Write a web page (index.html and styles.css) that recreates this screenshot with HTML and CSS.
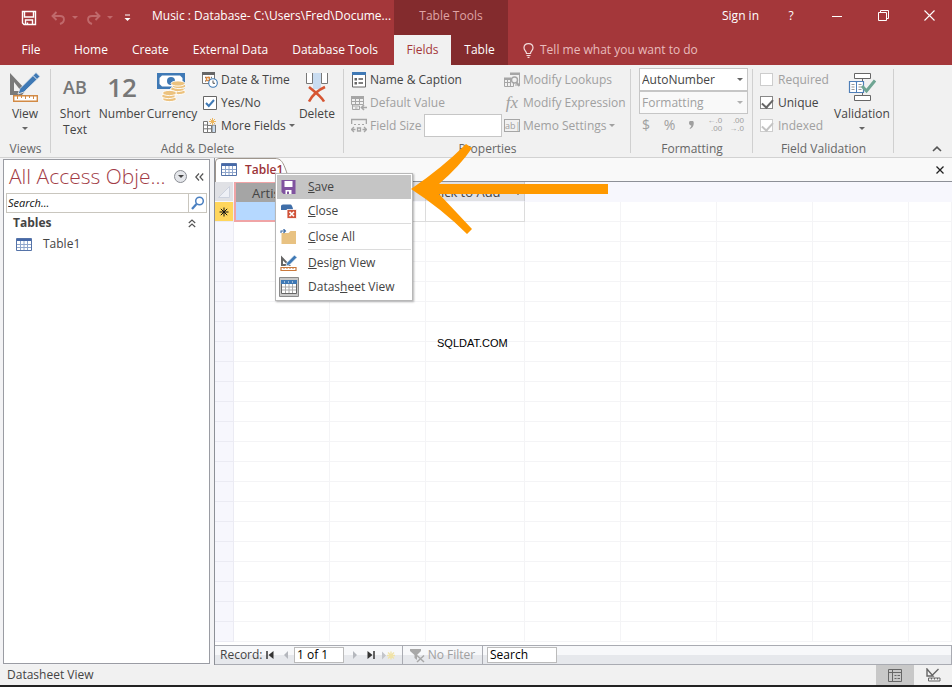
FILE: index.html
```html
<!DOCTYPE html>
<html lang="en">

<head>
    <meta charset="UTF-8">
    <meta name="viewport" content="width=device-width, initial-scale=1.0">
    <title>Music : Database</title>
    <link rel="stylesheet" href="styles.css">
</head>

<body>

    <header class="top-bar">
        <div class="top-left">
            <div class="quick-access">
                <button class="qa-save" aria-label="Save">
                    <svg width="16" height="16" viewBox="0 0 16 16"><path d="M1.500 1.500H14.500V14.500H3L1.500 13Z M3.500 1.500V7H12.500V1.500 M4.500 14.500V10H11.500V14.500 M6.500 12.500V14.500" fill="none" stroke="#fff" stroke-width="1.400"/></svg>
                </button>
                <button class="qa-undo" aria-label="Undo">
                    <svg width="15" height="14" viewBox="0 0 15 14"><path d="M5.500 1L1.500 5L5.500 9 M2 5H9C14 5 14.500 11 9 13" fill="none" stroke="#c0696b" stroke-width="1.900"/></svg>
                    <span class="caret"></span>
                </button>
                <button class="qa-redo" aria-label="Redo">
                    <svg width="15" height="14" viewBox="0 0 15 14"><path d="M9.500 1L13.500 5L9.500 9 M13 5H6C1 5 0.500 11 6 13" fill="none" stroke="#c0696b" stroke-width="1.900"/></svg>
                    <span class="caret"></span>
                </button>
                <button class="qa-more" aria-label="Customize Quick Access Toolbar">
                    <svg width="7" height="8" viewBox="0 0 7 8"><path d="M1 1H6" stroke="#fff"/><path d="M0.500 4H6.500L3.500 7Z" fill="#fff"/></svg>
                </button>
                <span class="app-title">Music : Database- C:\Users\Fred\Docume...</span>
            </div>
            <nav class="tabs">
                <button class="tab tab-file">File</button>
                <button class="tab">Home</button>
                <button class="tab">Create</button>
                <button class="tab">External Data</button>
                <button class="tab">Database Tools</button>
            </nav>
        </div>
        <div class="context-tabs">
            <div class="context-title">Table Tools</div>
            <nav class="tabs">
                <button class="tab active">Fields</button>
                <button class="tab">Table</button>
            </nav>
        </div>
        <div class="top-right">
            <div class="window-controls">
                <button class="sign-in">Sign in</button>
                <button class="win-btn" aria-label="Help">?</button>
                <button class="win-btn" aria-label="Minimize">
                    <svg width="10" height="10" viewBox="0 0 10 10"><path d="M0 5.500H10" stroke="#fff"/></svg>
                </button>
                <button class="win-btn" aria-label="Restore">
                    <svg width="11" height="11" viewBox="0 0 11 11"><path d="M0.500 2.500H8.500V10.500H0.500Z M2.500 2.500V0.500H10.500V8.500H8.500" fill="none" stroke="#fff"/></svg>
                </button>
                <button class="win-btn" aria-label="Close">
                    <svg width="11" height="11" viewBox="0 0 11 11"><path d="M0.500 0.500L10.500 10.500M10.500 0.500L0.500 10.500" stroke="#fff" stroke-width="1.100"/></svg>
                </button>
            </div>
            <button class="tell-me">
                <svg width="11" height="15" viewBox="0 0 11 15"><path d="M3.500 10.500C3.500 8 1 7.500 1 4.800C1 2.300 3 0.700 5.500 0.700S10 2.300 10 4.800C10 7.500 7.500 8 7.500 10.500Z M3.500 12.500H7.500 M4.500 14.300H6.500" fill="none" stroke="#f3dcdc" stroke-width="1.200"/></svg>
                Tell me what you want to do
            </button>
        </div>
    </header>

    <section class="ribbon">
        <div class="group group-views">
            <div class="group-body">
                <button class="big-btn">
                    <svg width="32" height="30" viewBox="0 0 32 30"><path d="M1 1V23H13L17 18Z M5 10V19H12Z" fill="#7a7a7a" fill-rule="evenodd"/><path d="M27 0.500L31 4.500L15 20L9 22L11 16.500Z" fill="#3f79b5" stroke="#f1f1f1" stroke-width="0.800"/><path d="M24 3.500L28 7.500" stroke="#f1f1f1"/><path d="M4.700 23.700H28.300V29.300H4.700Z" fill="#fff" stroke="#d28a45" stroke-width="1.400"/><path d="M8.500 24V27M12.500 24V26M16.500 24V27M20.500 24V26M24.500 24V27" stroke="#d28a45"/></svg>
                    <span>View</span>
                    <span class="caret"></span>
                </button>
            </div>
            <div class="group-label">Views</div>
        </div>

        <div class="group group-add">
            <div class="group-body">
                <button class="big-btn w-short"><span class="type-icon">AB</span><span>Short<br>Text</span></button>
                <button class="big-btn w-number"><span class="type-icon large">12</span><span>Number</span></button>
                <button class="big-btn w-currency">
                    <svg width="30" height="30" viewBox="0 0 30 30"><path d="M0 1H28V17H0Z" fill="#3f79b5"/><path d="M5 3.500H23L25.500 6V12L23 14.500H5L2.500 12V6Z" fill="#fff"/><circle cx="14" cy="9" r="4" fill="#3f79b5"/><g fill="#ecc27e" stroke="#fff" stroke-width="0.900"><ellipse cx="21.500" cy="20" rx="7" ry="2.600"/><ellipse cx="20.500" cy="17" rx="7" ry="2.600"/><ellipse cx="22" cy="14" rx="7" ry="2.600"/><ellipse cx="21" cy="11.500" rx="7" ry="2.600"/><ellipse cx="12.500" cy="27" rx="7" ry="2.600"/><ellipse cx="11.500" cy="24" rx="7" ry="2.600"/><ellipse cx="12.500" cy="21" rx="7" ry="2.600"/></g></svg>
                    <span>Currency</span>
                </button>
                <div class="small-col col-types">
                    <button class="small-btn">
                        <svg width="16" height="16" viewBox="0 0 16 16"><path d="M0.500 0.500H12.500V11.500H0.500Z" fill="#fff" stroke="#777"/><path d="M0 0H13V3H0Z" fill="#666"/><path d="M3 5.500H4M6 5.500H7M9 5.500H10M3 9H4" stroke="#777" stroke-width="1.500"/><path d="M4.500 5.500H7.500V8.500H4.500Z" fill="none" stroke="#e08a3c" stroke-width="1.300"/><circle cx="11" cy="11" r="4.300" fill="#fff" stroke="#3f79b5" stroke-width="1.100"/><path d="M11 8.500V11.300H13" fill="none" stroke="#555"/></svg>
                        Date &amp; Time
                    </button>
                    <button class="small-btn">
                        <svg width="16" height="16" viewBox="0 0 16 16"><path d="M1.500 1.500H14.500V14.500H1.500Z" fill="#fff" stroke="#666"/><path d="M4 8L6.800 11L12 5" fill="none" stroke="#3f79b5" stroke-width="2"/></svg>
                        Yes/No
                    </button>
                    <button class="small-btn">
                        <svg width="16" height="16" viewBox="0 0 16 16"><path d="M1.500 3.500H5.500V14.500H1.500Z M5.500 7.500H9.500V14.500H5.500Z M1.500 7H5.500M1.500 10.800H9.500" fill="#fff" stroke="#777"/><path d="M10 7H13.500V14.500H10Z" fill="#c9dcf0" stroke="#777"/><path d="M7 0H14V6.500H7Z" fill="#f1f1f1"/><path d="M10.500 0V7M7 3.500H14M8 1L13 6M13 1L8 6" stroke="#ecb65e"/></svg>
                        More Fields<span class="caret"></span>
                    </button>
                </div>
                <button class="big-btn w-delete">
                    <svg width="24" height="30" viewBox="0 0 24 30"><path d="M1.500 1V11.500H7.500V1M16.500 1V11.500H22.500V1" fill="#fff" stroke="#777"/><path d="M8 1H16V17H8Z" fill="#c9dcf0"/><path d="M4 15C9 19 16 24 19 29.500M20 15C13 18 7 24 4 29.500" fill="none" stroke="#d65532" stroke-width="2.600"/></svg>
                    <span>Delete</span>
                </button>
            </div>
            <div class="group-label">Add &amp; Delete</div>
        </div>

        <div class="group group-props">
            <div class="group-body">
                <div class="small-col col-caption">
                    <button class="small-btn">
                        <svg width="16" height="16" viewBox="0 0 16 16"><path d="M1.500 1.500H14.500V15H1.500Z" fill="#fff" stroke="#666"/><path d="M1 0H15V3H1Z" fill="#3f79b5"/><path d="M7.500 7H12M7.500 11H12" stroke="#555" stroke-width="1.400"/><path d="M3.500 6H6V8.500H3.500Z M3.500 10H6V12.500H3.500Z" fill="#666"/></svg>
                        Name &amp; Caption
                    </button>
                    <button class="small-btn" disabled>
                        <svg width="16" height="16" viewBox="0 0 16 16"><path d="M0.500 3.500H12.500V9.500H0.500Z M4.500 3V9.500M8.500 3V9.500M0.500 6.500H12.500 M1.500 9.500V14.500H8.500V11H1.500 M4 13H6.500" fill="none" stroke="#a6a6a6"/><path d="M0 1H13V4H0Z" fill="#a6a6a6"/><path d="M16 12.500H10.500M13 10L10.500 12.500L13 15" fill="none" stroke="#a6a6a6" stroke-width="1.600"/></svg>
                        Default Value
                    </button>
                    <div class="field-size">
                        <svg width="16" height="16" viewBox="0 0 16 16"><path d="M0.500 6V1.500H15.500V6" fill="none" stroke="#a6a6a6" stroke-width="1.600"/><path d="M3 6.500H13" stroke="#a6a6a6" stroke-dasharray="2 2"/><path d="M3 9L0.500 11.500L3 14M0.500 11.500H4.500M13 9L15.500 11.500L13 14M15.500 11.500H11.500M6.500 10H9.500V13H6.500Z" fill="none" stroke="#a6a6a6" stroke-width="1.300"/></svg>
                        <label for="fieldSize">Field Size</label>
                        <input type="text" id="fieldSize">
                    </div>
                </div>
                <div class="small-col">
                    <button class="small-btn" disabled>
                        <svg width="16" height="16" viewBox="0 0 16 16"><path d="M6.500 1.500H15.500V13H11M0.500 6.500H9.500V14.500H0.500Z M0.500 10.500H7M3.500 7V14.500M6.500 7V14.500" fill="none" stroke="#a6a6a6"/><path d="M6 0.500H16V3H6Z M0 5.500H7V8H0Z" fill="#a6a6a6"/><circle cx="10.500" cy="8" r="3" fill="#f1f1f1" stroke="#a6a6a6" stroke-width="1.400"/><path d="M12.500 10.500L15.500 14" stroke="#a6a6a6" stroke-width="2"/></svg>
                        Modify Lookups
                    </button>
                    <button class="small-btn" disabled>
                        <span class="fx-icon">fx</span>
                        Modify Expression
                    </button>
                    <button class="small-btn" disabled>
                        <span class="ab-icon">ab|</span>
                        Memo Settings<span class="caret"></span>
                    </button>
                </div>
            </div>
            <div class="group-label">Properties</div>
        </div>

        <div class="group group-format">
            <div class="group-body">
                <div class="combo">
                    <select aria-label="Data Type"><option>AutoNumber</option></select>
                </div>
                <div class="combo off">
                    <select aria-label="Format" disabled><option>Formatting</option></select>
                </div>
                <div class="format-buttons">
                    <button disabled>$</button>
                    <button disabled>%</button>
                    <button aria-label="Comma format" disabled><svg width="5" height="8" viewBox="0 0 5 8"><path d="M0 2A2.300 2.300 0 0 1 4.800 2C4.800 5 3.500 7 1 8L0.600 7.200C1.800 6.500 2.300 5.500 2.300 4.500C1 4.500 0 3.500 0 2Z" fill="#a0a0a0"/></svg></button>
                    <button class="decimals" disabled>←.0<br>.00</button>
                    <button class="decimals" disabled>.00<br>→.0</button>
                </div>
            </div>
            <div class="group-label">Formatting</div>
        </div>

        <div class="group group-valid">
            <div class="group-body">
                <div class="small-col col-checks">
                    <label class="check off"><input type="checkbox" disabled>Required</label>
                    <label class="check"><input type="checkbox" checked>Unique</label>
                    <label class="check off"><input type="checkbox" checked disabled>Indexed</label>
                </div>
                <button class="big-btn w-valid">
                    <svg width="28" height="30" viewBox="0 0 28 30"><path d="M6.500 1.500H22.500V6.500H6.500Z M6.500 23.500H22.500V28.500H6.500Z M14.500 6.500V10 M14.500 20V23.500" fill="#fff" stroke="#666"/><path d="M1.500 9.500H8L8.500 10.500L9 9.500H15.500V20.500H1.500Z" fill="#fff" stroke="#4f7fb8" stroke-width="1.200"/><path d="M8.500 10V20.500" stroke="#4f7fb8"/><path d="M3.500 12.500H6.500M3.500 15H6.500M3.500 17.500H6.500M10.500 12.500H13.500M10.500 15H13.500M10.500 17.500H13.500" stroke="#999"/><path d="M14 14L18.500 19L27 8.500" fill="none" stroke="#6fa593" stroke-width="3"/></svg>
                    <span>Validation</span>
                    <span class="caret"></span>
                </button>
            </div>
            <div class="group-label">Field Validation</div>
        </div>

        <button class="collapse" aria-label="Collapse the Ribbon">
            <svg width="10" height="6" viewBox="0 0 10 6"><path d="M1 5L5 1.200L9 5" fill="none" stroke="#555" stroke-width="1.600"/></svg>
        </button>
    </section>

    <main class="workspace">
        <aside class="nav-pane">
            <div class="nav-header">
                <h1>All Access Obje...</h1>
                <button class="round-btn" aria-label="Navigation options"><span class="caret"></span></button>
                <button class="shutter" aria-label="Shutter bar">
                    <svg width="9" height="8" viewBox="0 0 9 8"><path d="M4 0.500L0.800 4L4 7.500M8.200 0.500L5 4L8.200 7.500" fill="none" stroke="#555" stroke-width="1.200"/></svg>
                </button>
            </div>
            <div class="nav-search">
                <input type="text" placeholder="Search..." aria-label="Search objects">
                <button aria-label="Search">
                    <svg width="14" height="14" viewBox="0 0 14 14"><circle cx="8.500" cy="5" r="3.800" fill="#fff" stroke="#4a7fc0" stroke-width="1.500"/><path d="M5.500 8L1 13" stroke="#4a7fc0" stroke-width="2.200"/></svg>
                </button>
            </div>
            <div class="nav-section">
                <span>Tables</span>
                <svg width="8" height="9" viewBox="0 0 8 9"><path d="M0.800 4L4 1L7.200 4M0.800 8L4 5L7.200 8" fill="none" stroke="#555" stroke-width="1.200"/></svg>
            </div>
            <a class="nav-item" href="#table1">
                <svg width="16" height="13" viewBox="0 0 16 13"><path d="M0.500 0.500H15.500V12.500H0.500Z" fill="#fff" stroke="#5573a8"/><path d="M1 1H15V3H1Z" fill="#4669a8"/><path d="M1 6.500H15M1 9.500H15M4.500 3V12M8 3V12M11.500 3V12" stroke="#8fa6cc"/></svg>
                Table1
            </a>
        </aside>

        <section class="document" id="table1">
            <div class="doc-tabs">
                <button class="doc-tab">
                    <svg class="tab-shape" width="76" height="24" viewBox="0 0 76 24"><path d="M0.500 24V4Q0.500 0.500 4 0.500H60C68 0.500 69 7 75 24" fill="#fff" stroke="#9e958c"/></svg>
                    <svg width="16" height="13" viewBox="0 0 16 13"><path d="M0.500 0.500H15.500V12.500H0.500Z" fill="#fff" stroke="#5573a8"/><path d="M1 1H15V3H1Z" fill="#4669a8"/><path d="M1 6.500H15M1 9.500H15M4.500 3V12M8 3V12M11.500 3V12" stroke="#8fa6cc"/></svg>
                    <span>Table1</span>
                </button>
                <button class="doc-close" aria-label="Close table">
                    <svg width="8" height="8" viewBox="0 0 8 8"><path d="M0.500 0.500L7.500 7.500M7.500 0.500L0.500 7.500" stroke="#222" stroke-width="1.300"/></svg>
                </button>
            </div>

            <div class="sheet-wrap">
                <table class="sheet">
                    <colgroup>
                        <col class="c-sel"><col class="c-field"><col class="c-field"><col class="c-add"><col class="c-field"><col class="c-field"><col class="c-field"><col class="c-field"><col>
                    </colgroup>
                    <thead>
                        <tr>
                            <th class="corner"><svg width="12" height="12" viewBox="0 0 12 12"><path d="M11.500 0.500V11.500H0.500Z" fill="#eef0f6" stroke="#cdd2de"/></svg></th>
                            <th class="selected">ArtistId<span class="caret"></span></th>
                            <th class="field">Name<span class="caret"></span></th>
                            <th class="field">Click to Add<span class="caret"></span></th>
                            <th></th><th></th><th></th><th></th><th></th>
                        </tr>
                    </thead>
                    <tbody id="rows">
                        <tr class="new-row">
                            <td class="marker"><svg width="10" height="10" viewBox="0 0 10 10"><path d="M5 0.500V9.500M0.500 5H9.500M1.800 1.800L8.200 8.200M8.200 1.800L1.800 8.200" stroke="#111"/></svg></td>
                            <td class="current"></td><td class="cell"></td><td class="cell"></td>
                            <td></td><td></td><td></td><td></td><td></td>
                        </tr>
                    </tbody>
                </table>
                <div class="watermark">SQLDAT.COM</div>
            </div>

            <div class="record-bar">
                <label for="recordNo">Record:</label>
                <button aria-label="First record"><svg width="8" height="8" viewBox="0 0 8 8"><path d="M1 0V8" stroke="#333" stroke-width="1.500"/><path d="M7.500 0V8L2.500 4Z" fill="#333"/></svg></button>
                <button aria-label="Previous record"><svg width="8" height="8" viewBox="0 0 8 8"><path d="M6 0V8L2 4Z" fill="#b4b7bd"/></svg></button>
                <input class="record-no" id="recordNo" type="text" value="1 of 1">
                <button aria-label="Next record"><svg width="8" height="8" viewBox="0 0 8 8"><path d="M2 0V8L6 4Z" fill="#b4b7bd"/></svg></button>
                <button aria-label="Last record"><svg width="8" height="8" viewBox="0 0 8 8"><path d="M7 0V8" stroke="#333" stroke-width="1.500"/><path d="M0.500 0V8L5.500 4Z" fill="#333"/></svg></button>
                <button class="rec-new" aria-label="New record"><svg width="13" height="9" viewBox="0 0 13 9"><path d="M0 0.500V8.500L4 4.500Z" fill="#c3c5ca"/><path d="M9 0.500V8.500M5 4.500H13M6 1.500L12 7.500M12 1.500L6 7.500" stroke="#f0e3a8" stroke-width="1.300"/></svg></button>
                <button class="no-filter" disabled>
                    <svg width="15" height="15" viewBox="0 0 15 15"><path d="M0 1H11V3L7 7V12L4.500 10V7L0 3Z" fill="#a8a8a8"/><path d="M7 7.500L14 14M14 7.500L7 14" stroke="#a8a8a8" stroke-width="1.500"/></svg>
                    No Filter
                </button>
                <input class="record-search" type="text" value="Search" aria-label="Search records">
            </div>

            <div class="context-menu" role="menu">
                <button class="menu-item hover" role="menuitem">
                    <svg width="16" height="16" viewBox="0 0 16 16"><path d="M1 1H15V15H3L1 13Z" fill="#80539f"/><path d="M4 2H12V8H4Z M5 11H11V15H8.500V12.500H6.500V15H5Z" fill="#fff"/></svg>
                    <span><u>S</u>ave</span>
                </button>
                <button class="menu-item" role="menuitem">
                    <svg width="17" height="16" viewBox="0 0 17 16"><path d="M1 3Q1 1.500 3 1.500H10.500Q12 1.500 13 6V7H1Z" fill="#3f6ea8"/><path d="M7 6.500H16.500V15.500H7Z" fill="#d0533a" stroke="#fff" stroke-width="0.800"/><path d="M9.500 8.800L14 13.300M14 8.800L9.500 13.300" stroke="#fff" stroke-width="1.600"/></svg>
                    <span><u>C</u>lose</span>
                </button>
                <hr>
                <button class="menu-item" role="menuitem">
                    <svg width="16" height="16" viewBox="0 0 16 16"><path d="M1 4H8L10 2H15.500V15H1Z" fill="#e8c282"/><path d="M0.500 4V2H4M3 0L5 2L3 4" fill="none" stroke="#3f6ea8" stroke-width="1.100"/></svg>
                    <span><u>C</u>lose All</span>
                </button>
                <hr>
                <button class="menu-item" role="menuitem">
                    <svg width="17" height="16" viewBox="0 0 17 16"><path d="M1 0.500V11H11Z M3 5.500V9H6.500Z" fill="#666" fill-rule="evenodd"/><path d="M14.500 0L17 2.500L9.500 10L6 11L7 7.500Z" fill="#3f79b5" stroke="#fff" stroke-width="0.700"/><path d="M1 12.500H16V15.500H1Z" fill="#fff" stroke="#c9783c" stroke-width="1.200"/><path d="M4 12V14M7 12V14M10 12V14M13 12V14" stroke="#c9783c"/></svg>
                    <span><u>D</u>esign View</span>
                </button>
                <button class="menu-item checked" role="menuitem">
                    <svg width="20" height="20" viewBox="0 0 20 20"><path d="M0.500 0.500H19.500V19.500H0.500Z" fill="#c8c8c8" stroke="#8a8a8a"/><path d="M2.500 3.500H17.500V16.500H2.500Z" fill="#fff" stroke="#666"/><path d="M2 3H18V7H2Z" fill="#3f79b5"/><path d="M5 5H6M9 5H10M13 5H14" stroke="#fff"/><path d="M3 10H17M3 13H17M6.500 7V16M10 7V16M13.500 7V16" stroke="#aaa"/></svg>
                    <span>Datas<u>h</u>eet View</span>
                </button>
            </div>

            <svg class="pointer-arrow" width="200" height="92" viewBox="0 0 200 92"><path d="M1 46Q32 25 56 1L62 5Q50 23 29 41H198V51H29Q48 71 62 86L57 91Q32 66 1 46Z" fill="#ff9900"/></svg>
        </section>
    </main>

    <footer class="status-bar">
        <span>Datasheet View</span>
        <button class="view-btn active" aria-label="Datasheet View">
            <svg width="14" height="13" viewBox="0 0 14 13"><path d="M0.500 0.500H13.500V12.500H0.500Z M0.500 3.500H13.500 M4.500 0.500V12.500 M6.500 6.500H8.500M9.500 6.500H12M6.500 9.500H8.500M9.500 9.500H12" fill="none" stroke="#666"/></svg>
        </button>
        <button class="view-btn" aria-label="Design View">
            <svg width="15" height="14" viewBox="0 0 15 14"><path d="M1 1V8H7Z M12.500 1L6 7.500" fill="none" stroke="#666" stroke-width="1.400"/><path d="M2.500 10H14V13H2.500Z M5.500 10V11.500M8.500 10V11.500M11.500 10V11.500" fill="none" stroke="#666"/></svg>
        </button>
    </footer>

    <script src="script.js"></script>
</body>

</html>
```
FILE: styles.css
```css
/* General */

* {
    box-sizing: border-box;
}

body {
    font-family: "Open Sans", "Noto Sans", sans-serif;
    font-size: 12px;
    line-height: 16px;
    color: #444;
    background: #f1f1f1;
    margin: 0;
    min-height: 100vh;
    display: flex;
    flex-direction: column;
}

button,
input,
select {
    font: inherit;
    color: inherit;
    margin: 0;
    padding: 0;
    border: none;
    background: none;
}

svg {
    display: block;
    flex: none;
}

.caret {
    display: inline-block;
    flex: none;
    border: 3px solid transparent;
    border-top-color: currentColor;
    border-bottom: none;
}

/* Title bar and tabs */

.top-bar {
    display: flex;
    background: #a4373a;
    color: white;
}

.top-left {
    width: 394px;
}

.quick-access {
    height: 35px;
    padding-left: 21px;
    display: flex;
    align-items: center;
    white-space: nowrap;
}

.quick-access button {
    display: flex;
    align-items: center;
    gap: 6px;
    color: #c0696b;
}

.qa-save {
    width: 30px;
}

.qa-undo {
    width: 35px;
}

.qa-redo {
    width: 38px;
}

.qa-more {
    width: 28px;
}

.app-title {
    line-height: 32px;
    height: 35px;
}

.tabs {
    display: flex;
    height: 30px;
}

.tab {
    flex: none;
    padding: 0 12px;
    white-space: nowrap;
}

.tab-file {
    width: 62px;
}

.context-tabs {
    width: 114px;
    background: #832b2d;
}

.context-title {
    height: 35px;
    line-height: 32px;
    text-align: center;
    color: #dfa3a5;
}

.context-tabs .tab {
    flex: 1;
    padding: 0;
}

.tab.active {
    background: #f1f1f1;
    color: #a4373a;
}

.top-right {
    flex: 1;
}

.window-controls {
    height: 35px;
    padding-bottom: 4px;
    display: flex;
    justify-content: flex-end;
}

.sign-in {
    padding: 0 9px;
}

.win-btn {
    width: 46px;
    display: flex;
    align-items: center;
    justify-content: center;
}

.tell-me {
    height: 30px;
    padding-left: 15px;
    display: flex;
    align-items: center;
    gap: 6px;
    color: #e8bcbd;
}

/* Ribbon */

.ribbon {
    display: flex;
    height: 93px;
    padding-top: 3px;
    border-bottom: 1px solid #d2d2d2;
    white-space: nowrap;
}

.group {
    position: relative;
    display: flex;
    flex-direction: column;
    flex: none;
}

.group::after {
    content: "";
    position: absolute;
    right: 0;
    top: 1px;
    bottom: 4px;
    width: 1px;
    background: #d0d0d0;
}

.group-body {
    display: flex;
    height: 73px;
}

.group-label {
    text-align: center;
    color: #666;
}

.group-views {
    width: 51px;
}

.group-add {
    width: 293px;
}

.group-props {
    width: 287px;
}

.group-format {
    width: 122px;
}

.group-valid {
    width: 141px;
}

.big-btn {
    display: flex;
    flex: none;
    flex-direction: column;
    align-items: center;
    padding-top: 4px;
    width: 50px;
}

.big-btn svg,
.type-icon {
    height: 30px;
    margin-bottom: 4px;
}

.big-btn .caret {
    margin-top: 5px;
}

.type-icon {
    font-size: 18px;
    line-height: 30px;
    font-weight: 600;
    color: #777;
}

.type-icon.large {
    font-size: 26px;
}

.w-short {
    width: 48px;
}

.w-number {
    width: 46px;
}

.w-currency {
    width: 54px;
}

.w-delete {
    width: 44px;
}

.w-valid {
    width: 64px;
}

.small-col {
    display: grid;
    grid-template-rows: repeat(3, 23px);
    align-items: center;
    justify-items: start;
}

.small-btn,
.field-size {
    display: flex;
    align-items: center;
    gap: 3px;
}

.big-btn .caret,
.small-btn .caret {
    color: #666;
}

.col-types {
    flex: none;
    width: 93px;
    margin-left: 3px;
}

.col-caption {
    width: 153px;
    margin-left: 7px;
}

button:disabled,
.field-size,
.off {
    color: #a0a0a0;
}

.small-btn:disabled .caret {
    color: #a0a0a0;
}

.field-size input {
    width: 78px;
    height: 23px;
    background: white;
    border: 1px solid #c6c6c6;
}

.fx-icon {
    width: 16px;
    font: italic 17px/16px "Liberation Serif", serif;
}

.ab-icon {
    width: 16px;
    font-size: 9px;
    line-height: 11px;
    border: 1px solid #a6a6a6;
}

.group-format .group-body {
    flex-direction: column;
    padding: 0 5px 0 8px;
}

.combo {
    position: relative;
    height: 23px;
    border: 1px solid #c6c6c6;
    background: white;
}

.combo.off {
    background: #f9f9f9;
}

.combo select {
    appearance: none;
    width: 100%;
    height: 21px;
    padding-left: 2px;
    opacity: 1;
}

.combo::after {
    content: "";
    position: absolute;
    right: 4px;
    top: 9px;
    border: 3px solid transparent;
    border-top-color: #666;
    border-bottom: none;
}

.combo.off::after {
    border-top-color: #b0b0b0;
}

.format-buttons {
    display: flex;
    align-items: center;
    height: 22px;
}

.format-buttons button {
    width: 22px;
    font-size: 14px;
    text-align: left;
    padding-left: 3px;
}

.format-buttons svg {
    margin-left: 3px;
}

.format-buttons .decimals {
    font-family: "Liberation Sans", sans-serif;
    font-size: 8px;
    line-height: 8px;
    text-align: right;
    padding: 0 4px 0 0;
}

.col-checks {
    width: 72px;
    margin-left: 7px;
}

.check {
    display: flex;
    align-items: center;
    gap: 5px;
}

.check input {
    appearance: none;
    position: relative;
    width: 13px;
    height: 13px;
    background: white;
    border: 1px solid #888;
}

.check.off input {
    border-color: #cdcdcd;
}

.check input:checked::after {
    content: "";
    position: absolute;
    left: 3px;
    top: 0;
    width: 5px;
    height: 9px;
    border: solid #666;
    border-width: 0 2px 2px 0;
    transform: rotate(42deg);
}

.check.off input:checked::after {
    border-color: #c4c4c4;
}

.collapse {
    margin-left: auto;
    align-self: flex-end;
    padding: 0 10px 5px;
}

/* Navigation pane */

.workspace {
    flex: 1;
    display: flex;
    background: #f3f3f5;
}

.nav-pane {
    width: 207px;
    margin: 1px 4px 1px 3px;
    background: white;
    border: 1px solid #9a9ca3;
}

.nav-header {
    display: flex;
    align-items: center;
    height: 33px;
    padding-left: 5px;
}

.nav-header h1 {
    width: 165px;
    margin: 0;
    font-size: 21px;
    font-weight: 300;
    line-height: 33px;
    color: #a23c46;
    white-space: nowrap;
}

.round-btn {
    width: 13px;
    height: 13px;
    border: 1px solid #8a8d94;
    border-radius: 50%;
    background: #e4e6ea;
    display: flex;
    align-items: center;
    justify-content: center;
}

.shutter {
    margin-left: 8px;
}

.nav-search {
    display: flex;
    height: 20px;
    margin: 0 2px;
    border: 1px solid #c9c6be;
}

.nav-search input {
    flex: 1;
    min-width: 0;
    padding-left: 1px;
}

.nav-search input::placeholder {
    font-size: 11px;
    font-style: italic;
    color: #111;
}

.nav-search button {
    width: 18px;
    padding-left: 2px;
    border-left: 1px solid #c9c6be;
}

.nav-section {
    display: flex;
    align-items: center;
    justify-content: space-between;
    height: 20px;
    padding: 0 13px 0 9px;
    font-weight: 700;
}

.nav-item {
    display: flex;
    align-items: center;
    gap: 11px;
    height: 22px;
    padding-left: 12px;
    color: #444;
    text-decoration: none;
}

/* Document */

.document {
    position: relative;
    flex: 1;
    min-width: 0;
    display: flex;
    flex-direction: column;
    border-left: 1px solid #8d9097;
    background: white;
}

.doc-tabs {
    display: flex;
    justify-content: space-between;
    height: 24px;
    background: #f9f9f9;
    border-bottom: 1px solid #8d9097;
}

.doc-tab {
    position: relative;
    display: flex;
    align-items: center;
    gap: 8px;
    padding-left: 6px;
    font-weight: 600;
    color: #9b3237;
}

.doc-tab > * {
    position: relative;
}

.doc-tab .tab-shape {
    position: absolute;
    left: 0;
    top: 0;
}

.doc-close {
    padding: 0 8px;
}

.sheet-wrap {
    position: relative;
    flex: 1;
}

.sheet {
    width: 100%;
    table-layout: fixed;
    border-collapse: separate;
    border-spacing: 0;
}

.c-sel {
    width: 19px;
}

.c-field {
    width: 96px;
}

.c-add {
    width: 99px;
}

.sheet th,
.sheet td {
    height: 20px;
    padding: 0;
    border-right: 1px solid #f4f4f6;
    border-bottom: 1px solid #f4f4f6;
}

.sheet th {
    font-size: 13px;
    line-height: 18px;
    font-weight: 400;
    background: #f7f7fd;
    white-space: nowrap;
    border-color: #f7f7fd;
}

.sheet th.field {
    background: #e0e1e5;
    border-right-color: #c9cacf;
}

.sheet th.selected {
    padding-left: 4px;
    background: #a5a5a5;
    border: 2px solid #f0a4a6;
    border-width: 1px 2px 0;
}

.sheet th .caret {
    margin-left: 14px;
    vertical-align: middle;
}

.sheet .corner {
    background: #e0e1e5;
}

.corner svg,
.marker svg {
    margin: 0 auto;
}

.sheet td:first-child {
    background: #f7f7fd;
    border-color: #ebebf3;
}

.sheet td.marker {
    background: #ffd65c;
}

.sheet td.current {
    background: #b5d8ff;
    border: 2px solid #f0a4a6;
    border-top: none;
}

.sheet td.cell {
    border-color: #dcdcdc;
}

.watermark {
    position: absolute;
    left: 222px;
    top: 153px;
    font-family: "Liberation Sans", sans-serif;
    font-size: 11px;
    color: black;
}

/* Record navigation */

.record-bar {
    display: flex;
    align-items: center;
    height: 20px;
    padding-left: 5px;
    border: 1px solid #a9abb2;
    border-left: none;
    background: linear-gradient(#f7f8fa 50%, #e6e8ec 50%);
}

.record-bar label {
    width: 42px;
}

.record-bar button {
    width: 16px;
    display: flex;
    justify-content: center;
}

.record-bar input {
    height: 16px;
    padding-left: 2px;
    background: white;
    border: 1px solid #bbb;
    color: black;
}

.record-no {
    width: 50px;
    margin-right: 3px;
}

.record-bar .rec-new {
    width: 18px;
}

.record-bar .no-filter {
    width: 81px;
    height: 18px;
    align-items: center;
    gap: 3px;
    margin: 0 4px 0 5px;
    border: solid #a9abb2;
    border-width: 0 1px;
}

.record-search {
    width: 70px;
}

/* Context menu */

.context-menu {
    position: absolute;
    left: 60px;
    top: 15px;
    width: 138px;
    padding: 1px;
    background: white;
    border: 1px solid #b8b8b8;
    box-shadow: 1px 1px 2px rgba(0, 0, 0, 0.3);
}

.menu-item {
    display: flex;
    align-items: center;
    gap: 11px;
    width: 100%;
    height: 24px;
    padding-left: 3px;
    white-space: nowrap;
}

.menu-item svg {
    width: 17px;
}

.menu-item.checked {
    gap: 9px;
    padding-left: 2px;
}

.menu-item.checked svg {
    width: 20px;
}

.menu-item.hover {
    background: #c5c5c5;
}

.context-menu hr {
    height: 1px;
    margin: 0 0 1px 31px;
    border: none;
    background: #dcdcdc;
}

.pointer-arrow {
    position: absolute;
    left: 195px;
    top: -15px;
}

/* Status bar */

.status-bar {
    display: flex;
    align-items: center;
    height: 22px;
    padding-left: 7px;
    border-bottom: 2px solid #222;
}

.status-bar span {
    margin-right: auto;
}

.view-btn {
    width: 38px;
    height: 20px;
    display: flex;
    align-items: center;
    justify-content: center;
}

.view-btn.active {
    background: #c8c8c8;
}
```
FILE: script.js
```js
// fill the datasheet with empty rows below the new record row
const rows = document.getElementById('rows');

for (let i = 0; i < 21; i++) {
    const row = document.createElement('tr');
    for (let j = 0; j < 9; j++) {
        row.appendChild(document.createElement('td'));
    }
    rows.appendChild(row);
}
```
